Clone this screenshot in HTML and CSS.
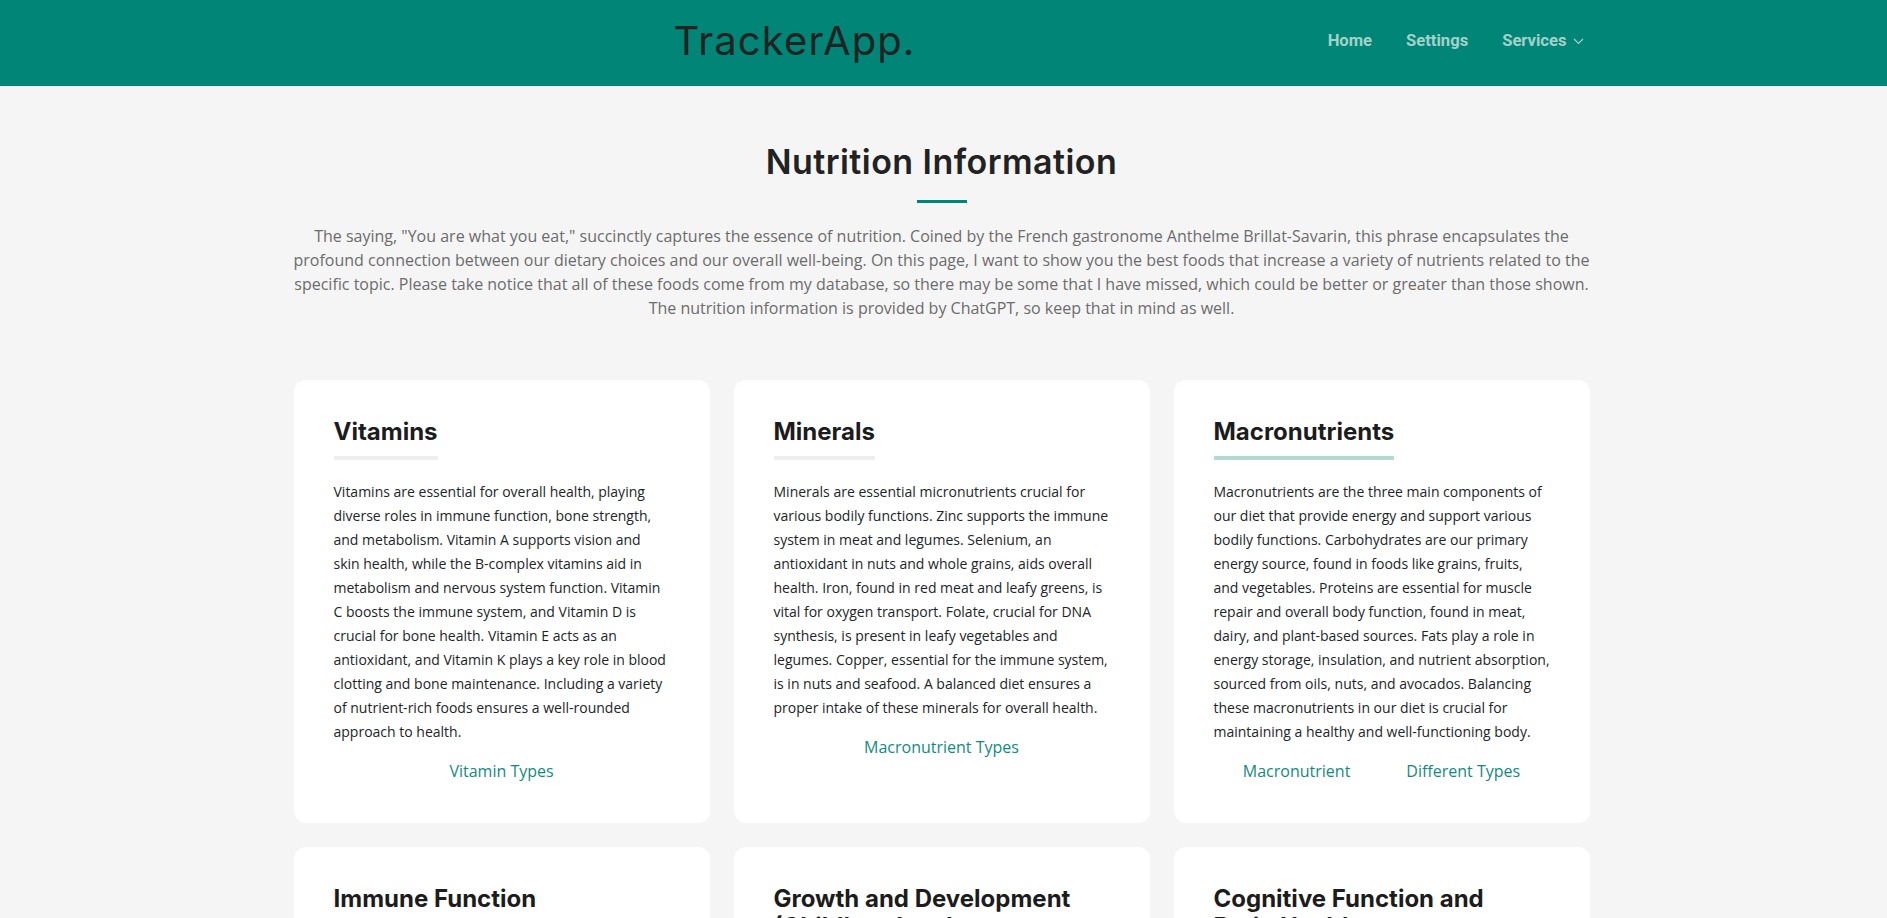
FILE: index.html
```html
<!DOCTYPE html>
<html lang="en">
<head>
<meta charset="utf-8">
<title>TrackerApp - Nutrition Information</title>
<link rel="stylesheet" href="styles.css">
</head>
<body>
<header class="site-header">
  <div class="header-inner">
    <a class="brand" href="#">TrackerApp.</a>
    <nav class="main-nav">
      <a class="nav-link" href="#">Home</a>
      <a class="nav-link" href="#">Settings</a>
      <a class="nav-link nav-dropdown" href="#">Services
        <svg class="chev" width="11" height="7" viewBox="0 0 11 7"><path d="M1 1l4.5 4.5L10 1" fill="none" stroke="currentColor" stroke-width="1.2"/></svg>
      </a>
    </nav>
  </div>
</header>

<main class="container">
  <section class="intro">
    <h1 class="page-title">Nutrition Information</h1>
    <div class="title-bar"></div>
    <p class="intro-text">The saying, "You are what you eat," succinctly captures the essence of nutrition. Coined by the French gastronome Anthelme Brillat-Savarin, this phrase encapsulates the profound connection between our dietary choices and our overall well-being. On this page, I want to show you the best foods that increase a variety of nutrients related to the specific topic. Please take notice that all of these foods come from my database, so there may be some that I have missed, which could be better or greater than those shown. The nutrition information is provided by ChatGPT, so keep that in mind as well.</p>
  </section>

  <section class="card-grid">
    <article class="card">
      <h3 class="card-title">Vitamins</h3>
      <p class="card-text">Vitamins are essential for overall health, playing diverse roles in immune function, bone strength, and metabolism. Vitamin A supports vision and skin health, while the B-complex vitamins aid in metabolism and nervous system function. Vitamin C boosts the immune system, and Vitamin D is crucial for bone health. Vitamin E acts as an antioxidant, and Vitamin K plays a key role in blood clotting and bone maintenance. Including a variety of nutrient-rich foods ensures a well-rounded approach to health.</p>
      <div class="card-links"><a href="#">Vitamin Types</a></div>
    </article>
    <article class="card">
      <h3 class="card-title">Minerals</h3>
      <p class="card-text">Minerals are essential micronutrients crucial for various bodily functions. Zinc supports the immune system in meat and legumes. Selenium, an antioxidant in nuts and whole grains, aids overall health. Iron, found in red meat and leafy greens, is vital for oxygen transport. Folate, crucial for DNA synthesis, is present in leafy vegetables and legumes. Copper, essential for the immune system, is in nuts and seafood. A balanced diet ensures a proper intake of these minerals for overall health.</p>
      <div class="card-links"><a href="#">Macronutrient Types</a></div>
    </article>
    <article class="card">
      <h3 class="card-title active">Macronutrients</h3>
      <p class="card-text">Macronutrients are the three main components of our diet that provide energy and support various bodily functions. Carbohydrates are our primary energy source, found in foods like grains, fruits, and vegetables. Proteins are essential for muscle repair and overall body function, found in meat, dairy, and plant-based sources. Fats play a role in energy storage, insulation, and nutrient absorption, sourced from oils, nuts, and avocados. Balancing these macronutrients in our diet is crucial for maintaining a healthy and well-functioning body.</p>
      <div class="card-links"><a href="#">Macronutrient</a><a href="#">Different Types</a></div>
    </article>
    <article class="card">
      <h3 class="card-title">Immune Function</h3>
      <p class="card-text">A strong immune system relies on a steady supply of vitamins and minerals. Vitamin C, Vitamin D, zinc and selenium all help the body defend itself against infections and recover faster.</p>
      <div class="card-links"><a href="#">Immune Foods</a></div>
    </article>
    <article class="card">
      <h3 class="card-title">Growth and Development (Childhood and Adolescence)</h3>
      <p class="card-text">During childhood and adolescence the body needs protein, calcium, iron and Vitamin D to build strong bones, muscles and tissues and to support healthy development.</p>
      <div class="card-links"><a href="#">Growth Foods</a></div>
    </article>
    <article class="card">
      <h3 class="card-title">Cognitive Function and Brain Health</h3>
      <p class="card-text">Omega-3 fatty acids, B vitamins and antioxidants support memory, focus and long-term brain health. Fish, nuts, seeds and berries are excellent sources.</p>
      <div class="card-links"><a href="#">Brain Foods</a></div>
    </article>
  </section>
</main>
</body>
</html>
```

FILE: styles.css
```css
* { box-sizing: border-box; }

body {
  margin: 0;
  background: #f5f5f5;
  font-family: "Open Sans", "Liberation Sans", sans-serif;
  color: #212529;
}

a { text-decoration: none; }

.site-header {
  background: #008576;
  height: 86px;
}

.header-inner {
  width: 1320px;
  margin: 0 auto;
  padding: 0 20px 0 390px;
  height: 100%;
  display: flex;
  align-items: center;
  justify-content: space-between;
}

.brand {
  font-family: "Inter", "Noto Sans", sans-serif;
  font-size: 40px;
  font-weight: 400;
  color: #222;
  letter-spacing: 1.1px;
  margin-top: -6px;
}

.main-nav {
  display: flex;
  gap: 34px;
  align-items: center;
  margin-top: -6px;
}

.nav-link {
  font-family: "Roboto", "Liberation Sans", sans-serif;
  font-weight: 700;
  font-size: 16.6px;
  color: #a3d2cb;
  display: flex;
  align-items: center;
  gap: 6px;
}

.chev { margin-top: 2px; }

.container {
  width: 1320px;
  margin: 0 auto;
  padding: 0 14px 0 10px;
}

.intro {
  text-align: center;
  padding-top: 56px;
}

.page-title {
  font-family: "Inter", "Noto Sans", sans-serif;
  font-weight: 600;
  font-size: 34px;
  letter-spacing: 0.45px;
  color: #222;
  margin: 0;
  line-height: 1.2;
}

.title-bar {
  width: 50px;
  height: 3px;
  background: #008576;
  margin: 17px auto 0;
}

.intro-text {
  margin: 21px 0 0;
  font-size: 16px;
  line-height: 24px;
  color: #6c6c6c;
}

.card-grid {
  display: grid;
  grid-template-columns: repeat(3, 1fr);
  gap: 24px;
  margin-top: 60px;
  padding-bottom: 40px;
}

.card {
  background: #fff;
  border-radius: 12px;
  padding: 38px 40px 40px;
  display: flex;
  flex-direction: column;
  align-items: flex-start;
}

.card-title {
  font-family: "Inter", "Noto Sans", sans-serif;
  font-weight: 700;
  font-size: 24px;
  line-height: 1.2;
  color: #1c1c1c;
  margin: 0;
  padding-bottom: 9px;
  border-bottom: 4px solid #eeeeee;
}

.card-title.active { border-bottom-color: #b6d8d3; }

.card-text {
  font-size: 14px;
  line-height: 24px;
  margin: 20px 0 0;
  color: #212529;
}

.card-links {
  align-self: stretch;
  display: flex;
  justify-content: center;
  gap: 56px;
  margin-top: 15px;
}

.card-links a {
  font-size: 16px;
  line-height: 24px;
  color: #148a7f;
}
```
